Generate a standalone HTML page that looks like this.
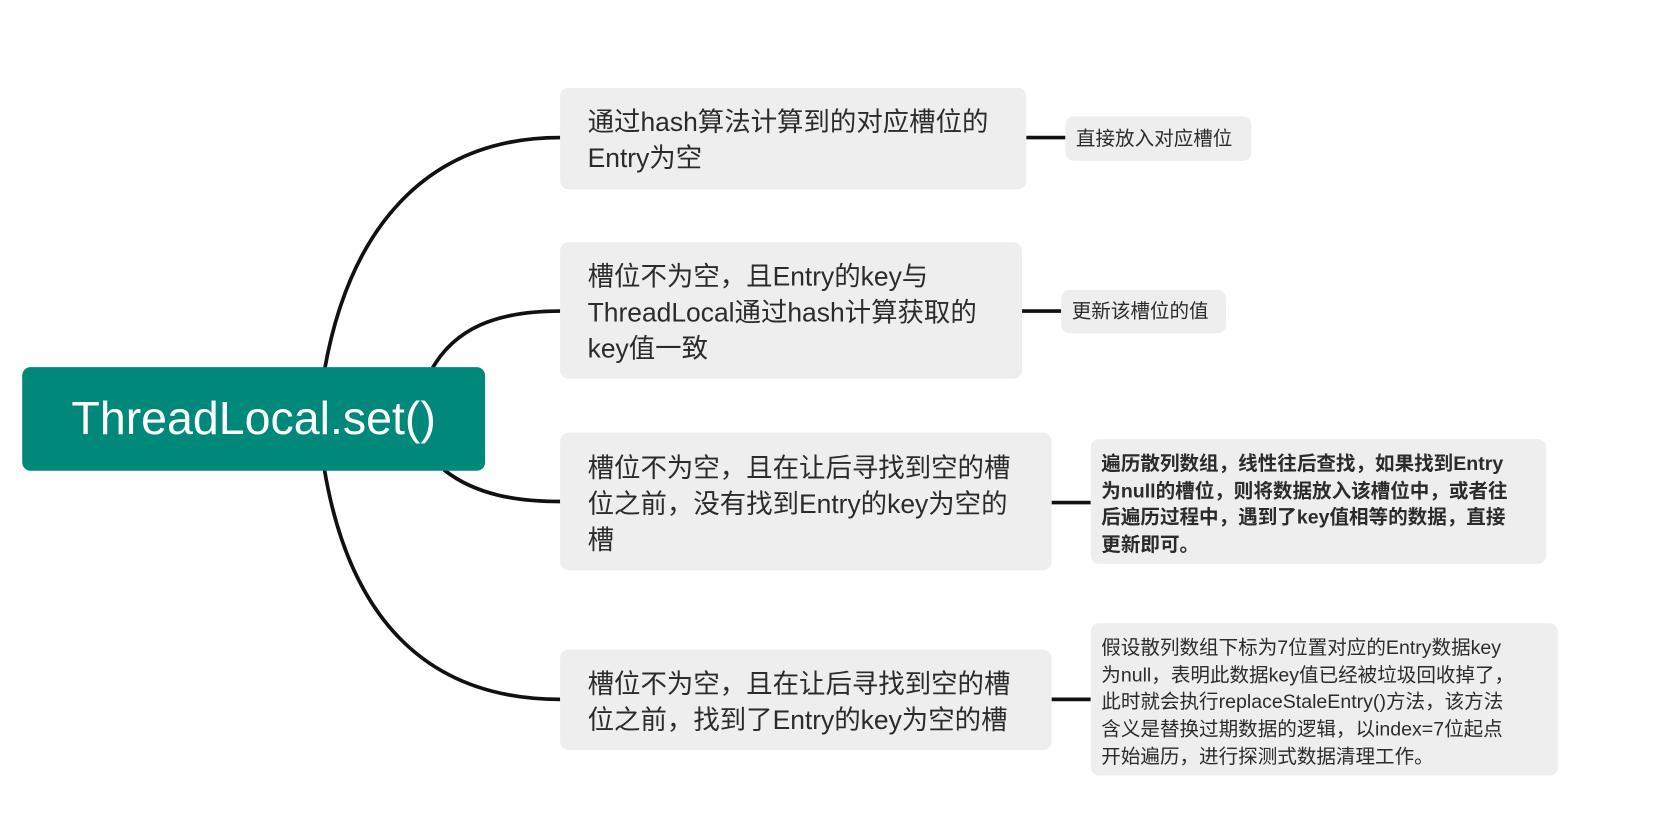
<!DOCTYPE html>
<html><head><meta charset="utf-8"><style>
html,body{margin:0;padding:0;background:#fff;overflow:hidden;width:1657px;height:831px}
#w{position:absolute;left:0;top:0;width:1560px;height:782px;transform:scale(1.0569,1.058);transform-origin:0 0}
.b{position:absolute;background:#eeeeee;border-radius:8px;color:#2b2b2b;font-family:"Liberation Sans","Noto Sans CJK SC",sans-serif;white-space:nowrap;box-sizing:border-box}
.m{font-size:25px;line-height:34px;padding-left:26px}
.l{font-size:18.5px;line-height:26px;padding-left:10px}
#root{position:absolute;left:21px;top:347px;width:438px;height:98px;background:#00897b;border-radius:8px;color:#fff;font-family:"Liberation Sans",sans-serif;font-size:44px;line-height:98px;text-align:center}
svg{position:absolute;left:0;top:0}
</style></head><body><div id="w">
<svg width="1560" height="782"><g fill="none" stroke="#111" stroke-width="3.5">
<path d="M307,350 C330,220 400,130 530,130"/>
<path d="M408,350 C430,310 470,294 530,294"/>
<path d="M420,444 C450,468 490,474 530,474"/>
<path d="M307,444 C330,580 400,661 530,661"/>
<path d="M971,130 H1008"/><path d="M967,294 H1004"/><path d="M995,475 H1032"/><path d="M995,661 H1032"/>
</g></svg>
<div id="root">ThreadLocal.set()</div>
<div class="b m" style="left:530px;top:83px;width:441px;height:96px;padding-top:16px">通过hash算法计算到的对应槽位的<br>Entry为空</div>
<div class="b m" style="left:530px;top:229px;width:437px;height:129px;padding-top:16px">槽位不为空，且Entry的key与<br>ThreadLocal通过hash计算获取的<br>key值一致</div>
<div class="b m" style="left:530px;top:409px;width:465px;height:130px;padding-top:17px">槽位不为空，且在让后寻找到空的槽<br>位之前，没有找到Entry的key为空的<br>槽</div>
<div class="b m" style="left:530px;top:614px;width:465px;height:95px;padding-top:16px">槽位不为空，且在让后寻找到空的槽<br>位之前，找到了Entry的key为空的槽</div>
<div class="b l" style="left:1008px;top:110px;width:176px;height:42px;padding-top:8px">直接放入对应槽位</div>
<div class="b l" style="left:1004px;top:274px;width:156px;height:41px;padding-top:7px">更新该槽位的值</div>
<div class="b l" style="left:1032px;top:415px;width:431px;height:118px;padding-top:10px;font-weight:bold;line-height:25.7px">遍历散列数组，线性往后查找，如果找到Entry<br>为null的槽位，则将数据放入该槽位中，或者往<br>后遍历过程中，遇到了key值相等的数据，直接<br>更新即可。</div>
<div class="b l" style="left:1032px;top:589px;width:442px;height:144px;padding-top:10px;line-height:25.7px">假设散列数组下标为7位置对应的Entry数据key<br>为null，表明此数据key值已经被垃圾回收掉了，<br>此时就会执行replaceStaleEntry()方法，该方法<br>含义是替换过期数据的逻辑，以index=7位起点<br>开始遍历，进行探测式数据清理工作。</div>
</div></body></html>
